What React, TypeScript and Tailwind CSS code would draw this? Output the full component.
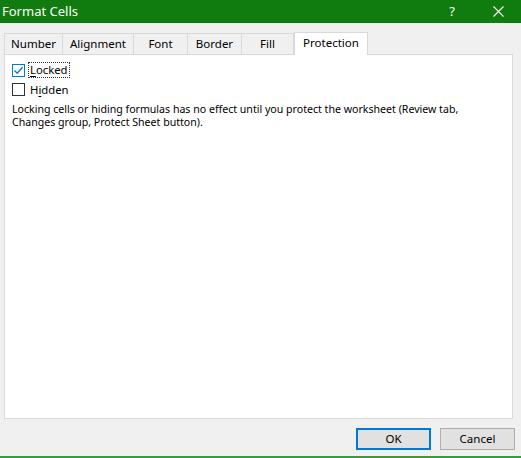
import React from "react";

const tabs = ["Number", "Alignment", "Font", "Border", "Fill", "Protection"];
const tabWidths = ["w-[59px]", "w-[71px]", "w-[54px]", "w-[54px]", "w-[52px]", "w-[74px]"];

function Checkbox({ checked, focused }: { checked?: boolean; focused?: boolean }) {
  return (
    <span
      className={`flex items-center justify-center w-[13px] h-[13px] border bg-white shrink-0 ${
        focused ? "border-[#0078d7]" : "border-[#333333]"
      }`}
    >
      {checked && (
        <svg width="11" height="11" viewBox="0 0 11 11">
          <path d="M1.5 5.5 L4.2 8.2 L9.5 2.2" fill="none" stroke="#0078d7" strokeWidth="1.3" />
        </svg>
      )}
    </span>
  );
}

export default function App() {
  return (
    <div
      className="w-[521px] h-[458px] bg-[#f0f0f0] flex flex-col overflow-hidden text-[#000]"
      style={{ fontFamily: '"Noto Sans", "Open Sans", sans-serif' }}
    >
      {/* Title bar */}
      <div className="h-[23px] bg-[#107c10] flex items-center text-white shrink-0">
        <span className="pl-[2px] text-[13px] leading-none flex-1">Format Cells</span>
        <span className="w-[46px] text-center text-[13px] leading-none">?</span>
        <span className="w-[46px] flex justify-center">
          <svg width="11" height="11" viewBox="0 0 11 11">
            <path d="M0.5 0.5 L10.5 10.5 M10.5 0.5 L0.5 10.5" stroke="white" strokeWidth="1.1" />
          </svg>
        </span>
      </div>

      {/* Tabs */}
      <div className="flex items-end h-[31px] pl-[4px] shrink-0">
        {tabs.map((t, i) => {
          const active = t === "Protection";
          return (
            <div
              key={t}
              className={`${tabWidths[i]} flex items-center justify-center text-[11.5px] border-[#d9d9d9] ${
                active
                  ? "h-[23px] bg-white border-l border-r border-t -mb-px relative z-10 pb-[3px]"
                  : "h-[21px] bg-[#f0f0f0] border-t border-r" + (i === 0 ? " border-l" : "")
              }`}
            >
              {t}
            </div>
          );
        })}
      </div>

      {/* Panel */}
      <div className="mx-[4px] mr-[8px] h-[365px] bg-white border border-[#d9d9d9] shrink-0 px-[7px] pt-[7px] text-[10.6px] leading-[13px]">
        <div className="flex items-center gap-[3px] h-[16px] text-[11.3px]">
          <Checkbox checked focused />
          <span className="border border-dotted border-[#333] px-[1px] leading-[14px]">
            <span className="underline underline-offset-2">L</span>ocked
          </span>
        </div>
        <div className="flex items-center gap-[4px] h-[16px] mt-[3px] text-[11.3px]">
          <Checkbox />
          <span className="px-[1px]">
            H<span className="underline underline-offset-2">i</span>dden
          </span>
        </div>
        <p className="mt-[6px]">
          Locking cells or hiding formulas has no effect until you protect the worksheet (Review tab,
          <br />
          Changes group, Protect Sheet button).
        </p>
      </div>

      {/* Buttons */}
      <div className="flex justify-end gap-[9px] pr-[6px] pt-[9px] shrink-0">
        <button className="w-[75px] h-[22px] bg-[#e1e1e1] border-2 border-[#0078d7] text-[11.5px] leading-none">
          OK
        </button>
        <button className="w-[75px] h-[22px] bg-[#e1e1e1] border border-[#adadad] text-[11.5px] leading-none">
          Cancel
        </button>
      </div>
      <div className="flex-1" />
      <div className="h-[2px] bg-[#3c9a3c] shrink-0" />
    </div>
  );
}
